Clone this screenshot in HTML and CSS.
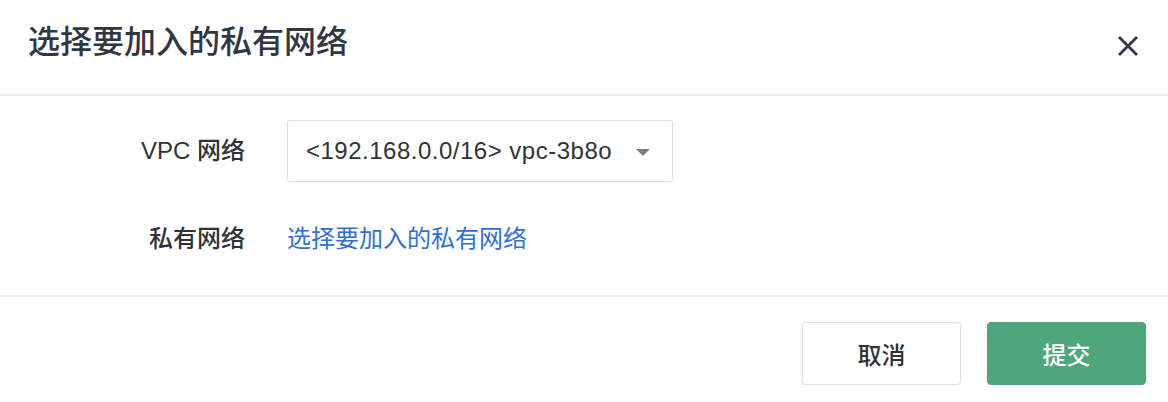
FILE: index.html
```html
<!DOCTYPE html>
<html lang="zh-CN">
<head>
    <meta charset="UTF-8">
    <meta name="viewport" content="width=device-width, initial-scale=1.0">
    <title>选择要加入的私有网络</title>
    <link rel="stylesheet" href="styles.css">
</head>
<body>
    <div class="dialog">
        <div class="dialog-header">
            <h2 class="dialog-title">选择要加入的私有网络</h2>
            <button class="close-btn" aria-label="关闭">
                <svg width="22" height="22" viewBox="0 0 22 22">
                    <path d="M2 2 L20 20 M20 2 L2 20" stroke="#303642" stroke-width="2.8" stroke-linecap="butt" fill="none"/>
                </svg>
            </button>
        </div>
        <div class="dialog-body">
            <div class="form-row">
                <label class="form-label">VPC 网络</label>
                <div class="select">
                    <span class="select-value">&lt;192.168.0.0/16&gt; vpc-3b8o</span>
                    <span class="select-arrow"></span>
                </div>
            </div>
            <div class="form-row">
                <label class="form-label">私有网络</label>
                <a class="link" href="#">选择要加入的私有网络</a>
            </div>
        </div>
        <div class="dialog-footer">
            <button class="btn">取消</button>
            <button class="btn btn-primary">提交</button>
        </div>
    </div>
</body>
</html>
```

FILE: styles.css
```css
body {
    margin: 0;
    background-color: #fff;
    font-family: "Liberation Sans", "Noto Sans CJK SC", sans-serif;
    color: #2f3337;
}
.dialog {
    width: 1168px;
}
.dialog-header {
    height: 96px;
    box-sizing: border-box;
    padding: 22px 29px 0 28px;
    display: flex;
    align-items: flex-start;
    justify-content: space-between;
    border-bottom: 2px solid #ececec;
}
.dialog-title {
    margin: 0;
    font-size: 32px;
    line-height: 40px;
    font-weight: 500;
    color: #303642;
}
.close-btn {
    margin-top: 13px;
    padding: 0;
    width: 22px;
    height: 22px;
    border: none;
    background: none;
    cursor: pointer;
}
.dialog-body {
    padding: 24px 0 39px 0;
    display: flex;
    flex-direction: column;
    gap: 40px;
}
.form-row {
    display: flex;
    align-items: center;
    gap: 42px;
}
.form-label {
    width: 245px;
    text-align: right;
    font-size: 24px;
    line-height: 34px;
    font-weight: 500;
    color: #2f3337;
}
.select {
    width: 386px;
    height: 62px;
    box-sizing: border-box;
    border: 1px solid #dcdfe6;
    border-radius: 3px;
    box-shadow: 0 1px 2px rgba(0, 0, 0, 0.06);
    padding: 0 22px 0 18px;
    display: flex;
    align-items: center;
    justify-content: space-between;
}
.select-value {
    font-size: 24px;
    letter-spacing: 0.5px;
    color: #2f3337;
}
.select-arrow {
    width: 0;
    height: 0;
    border-left: 7px solid transparent;
    border-right: 7px solid transparent;
    border-top: 7px solid #7a7d82;
    margin-top: 2px;
}
.link {
    font-size: 24px;
    line-height: 34px;
    color: #2f6fd6;
    text-decoration: none;
}
.dialog-footer {
    border-top: 2px solid #ececec;
    padding: 25px 22px 0 0;
    display: flex;
    justify-content: flex-end;
    gap: 26px;
}
.btn {
    width: 159px;
    height: 63px;
    font-family: "Liberation Sans", "Noto Sans CJK SC", sans-serif;
    font-size: 24px;
    font-weight: 500;
    color: #2f3337;
    background-color: #fff;
    border: 1px solid #dcdfe6;
    border-radius: 4px;
    box-shadow: 0 1px 3px rgba(0, 0, 0, 0.08);
    cursor: pointer;
}
.btn-primary {
    background-color: #4ea77a;
    border-color: #4ea77a;
    color: #fff;
}
```
